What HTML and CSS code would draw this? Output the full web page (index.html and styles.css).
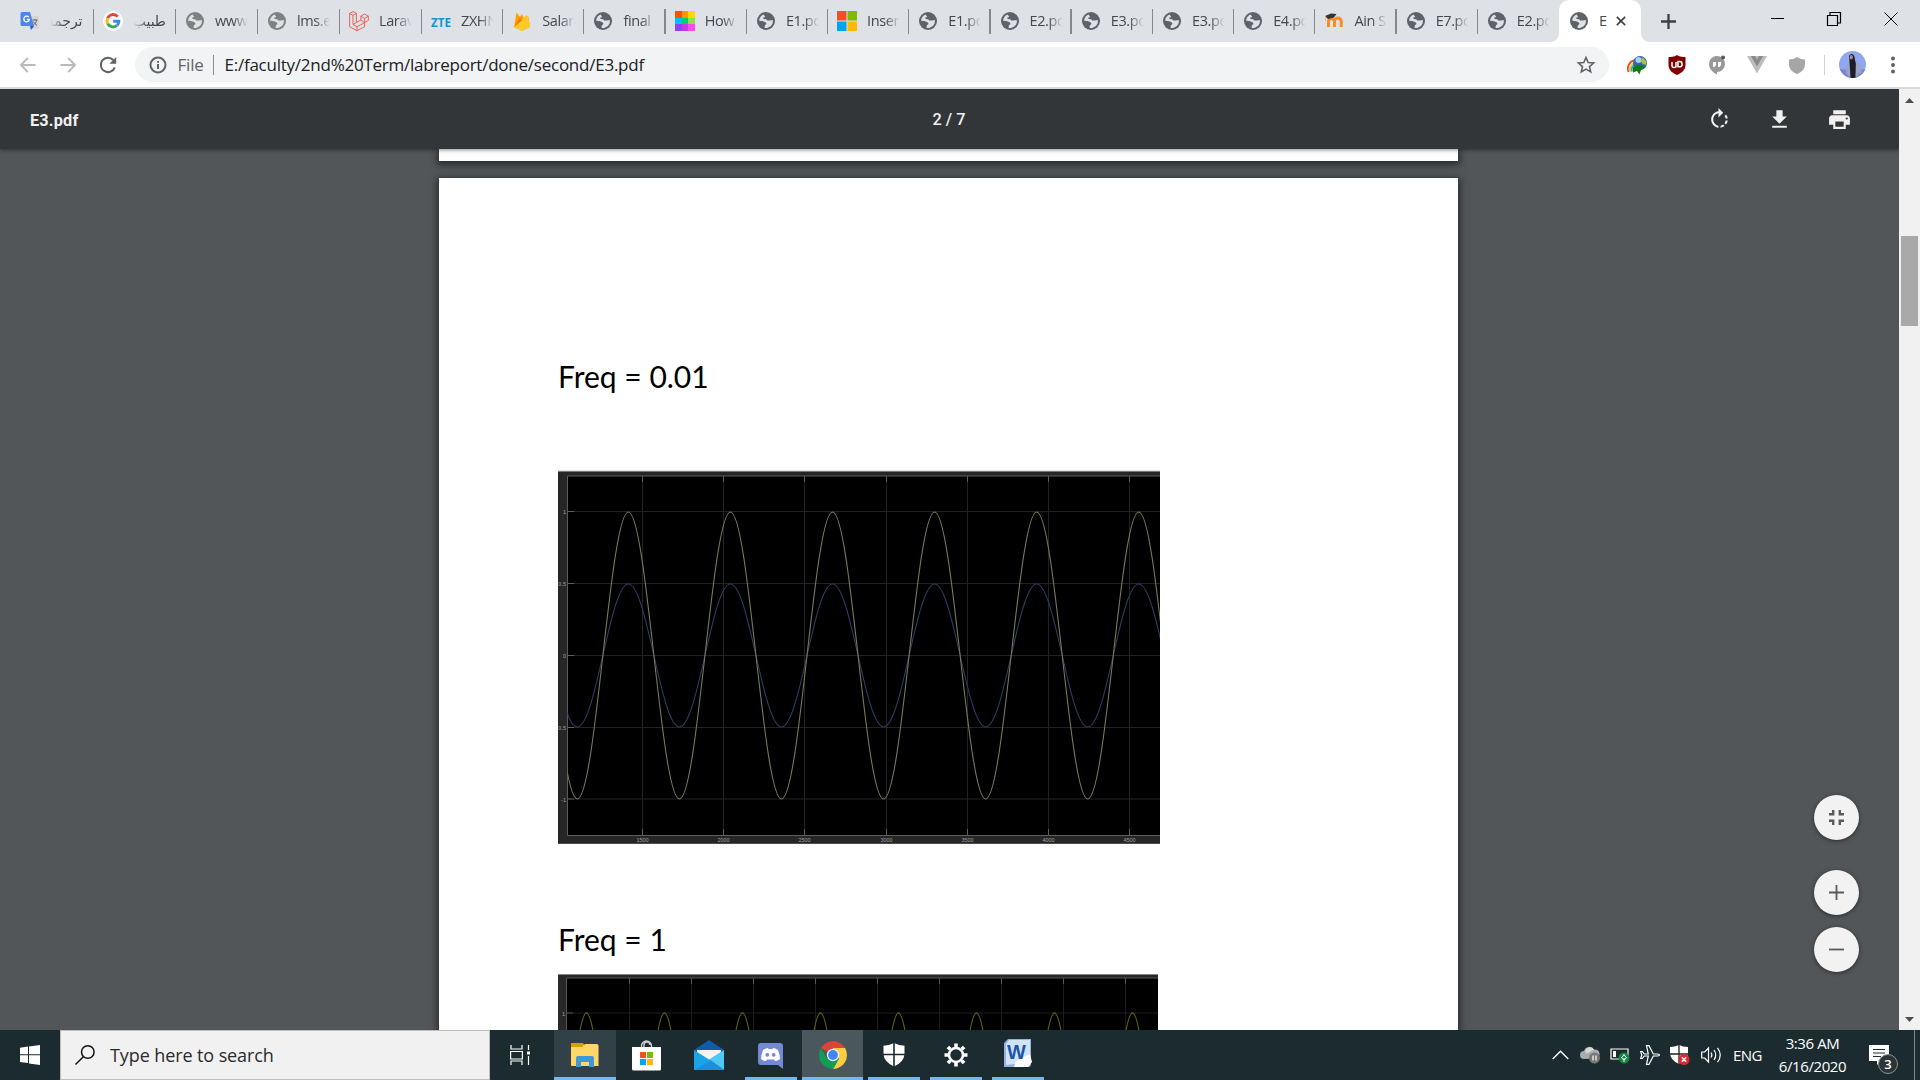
FILE: index.html
```html
<!DOCTYPE html>
<html lang="en">
<head>
<meta charset="utf-8">
<title>E3.pdf</title>
<link rel="stylesheet" href="styles.css">
</head>
<body>
<svg class="defs" aria-hidden="true">
  <symbol id="globe" viewBox="0 0 18 18">
    <circle cx="9" cy="9" r="9" fill="currentColor"/>
    <path d="M6.6 2.6C3.9 3.600 2.200 6.100 2.100 8.700L5.200 8.900 8.600 10.200 9.600 11.900 7.900 13.300 7.500 15.700C8.400 16 9.800 16 10.700 15.700 12.800 15.100 14.400 13.800 15.300 12 15.900 10.800 16 9.400 15.800 8.100L12.900 8.600 10.200 8.400 9.300 7.300 6.500 6.900 6.300 5.500 8.300 4.900Z" fill="#dee1e6"/>
    <path d="M8.600 2.100 9.400 3.500 8.100 5.600 9.200 6.900 12 8 15.900 7.600 14.600 4.500Z" fill="currentColor"/>
  </symbol>
</svg>

<header class="tabstrip">
  <div class="tab tab-first rtl"><svg class="fav" viewBox="0 0 20 20"><path d="M9 5h9a1 1 0 0 1 1 1v12H12z" fill="#d5d5d5"/><path d="M2 1h8l4 14H2a1.500 1.500 0 0 1-1.500-1.500v-11A1.500 1.500 0 0 1 2 1z" fill="#4a86ee"/><path d="M10 15h4l-3 4z" fill="#2a56c6"/><path d="M8.800 6.200A2.800 2.800 0 1 0 9.400 8.400H6.800" stroke="#fff" stroke-width="1.300" fill="none"/><path d="M12.500 9h5M15 8v1M16.800 9c-.5 2.500-2 4-3.500 5M13.500 10.500c1 2 2 3 3.500 3.800" stroke="#666" fill="none"/></svg><span class="label">ترجمة</span></div>
  <div class="tab wide rtl"><svg class="fav" viewBox="0 0 20 20"><circle cx="10" cy="10" r="10" fill="#fff"/><g fill="none" stroke-width="2.900"><path d="M14.700 5.600A6 6 0 0 0 4.700 7.200" stroke="#ea4335"/><path d="M4.700 7.200a6 6 0 0 0 0 5.600" stroke="#fbbc05"/><path d="M4.700 12.800a6 6 0 0 0 9.400 1.500" stroke="#34a853"/><path d="M14.100 14.300A6 6 0 0 0 15.900 10.200H10.200" stroke="#4285f4"/></g></svg><span class="label">طبيب</span></div>
  <div class="tab wide"><svg class="fav globe pale"><use href="#globe"/></svg><span class="label">www.</span></div>
  <div class="tab wide"><svg class="fav globe pale"><use href="#globe"/></svg><span class="label">lms.e</span></div>
  <div class="tab wide"><svg class="fav" viewBox="0 0 20 20"><path d="M.6 2.400 4 .6l3.400 1.800v9.200l4.400-2.500V5.200L15.600 3l3.800 2.200v4.200L15.600 11.600v4.200L8 19.600.6 15.800zM.6 2.400 4 4.300 7.400 2.400M4 4.300v9.200l3.400-1.900M4 13.500l4 2.300 7.600-4.200-3.800-2.500M8 15.800v3.800M11.800 5.200l3.800 2.200 3.800-2.200M15.600 7.400v4.200" stroke="#f0554d" stroke-width=".9" fill="none"/></svg><span class="label">Larav</span></div>
  <div class="tab"><svg class="fav" viewBox="0 0 20 20"><text x="0" y="16" textLength="20" lengthAdjust="spacingAndGlyphs" class="zte">ZTE</text></svg><span class="label">ZXHN</span></div>
  <div class="tab"><svg class="fav" viewBox="0 0 20 20"><path d="M2 16 4.500 1.500 8 6 9.800 3l2 4L14 4.500l2.400 1L18 16l-8 4z" fill="#ffa000"/><path d="M2 16 14.500 4.500 16 5.500 18 16l-8 4z" fill="#ffca28"/><path d="M2 16 8 6l2 3.500z" fill="#f57c00"/></svg><span class="label">Salar</span></div>
  <div class="tab"><svg class="fav globe"><use href="#globe"/></svg><span class="label">final</span></div>
  <div class="tab"><svg class="fav" viewBox="0 0 20 20"><path fill="#ff5100" d="M0 0h7v7H0z"/><path fill="#ff9400" d="M7 0h6v7H7z"/><path fill="#ffd800" d="M13 0h7v7h-7z"/><path fill="#00bfff" d="M0 7h7v6H0z"/><path fill="#00d063" d="M7 7h6v6H7z"/><path fill="#85e550" d="M13 7h7v6h-7z"/><path fill="#8d42f5" d="M0 13h7v7H0z"/><path fill="#c738e8" d="M7 13h6v7H7z"/><path fill="#ff49ef" d="M13 13h7v7h-7z"/></svg><span class="label">How</span></div>
  <div class="tab"><svg class="fav globe"><use href="#globe"/></svg><span class="label">E1.pd</span></div>
  <div class="tab"><svg class="fav" viewBox="0 0 20 20"><path fill="#f25022" d="M0 0h9.500v9.500H0z"/><path fill="#7fba00" d="M10.500 0H20v9.500h-9.500z"/><path fill="#00a4ef" d="M0 10.500h9.500V20H0z"/><path fill="#ffb900" d="M10.500 10.500H20V20h-9.500z"/></svg><span class="label">Inser</span></div>
  <div class="tab"><svg class="fav globe"><use href="#globe"/></svg><span class="label">E1.pd</span></div>
  <div class="tab"><svg class="fav globe"><use href="#globe"/></svg><span class="label">E2.pd</span></div>
  <div class="tab"><svg class="fav globe"><use href="#globe"/></svg><span class="label">E3.pd</span></div>
  <div class="tab"><svg class="fav globe"><use href="#globe"/></svg><span class="label">E3.pd</span></div>
  <div class="tab"><svg class="fav globe"><use href="#globe"/></svg><span class="label">E4.pd</span></div>
  <div class="tab"><svg class="fav" viewBox="0 0 20 20"><path d="M4.500 16V10.500a3 3 0 0 1 6 0V16M10.500 16v-5.500a3.200 3.200 0 0 1 6.800 0V16" stroke="#f98c25" stroke-width="3" fill="none"/><path d="M1 5 7 2.500 12.500 3 10 6.500 4 8z" fill="#333"/><path d="M1.500 5.500v5" stroke="#f5b98a"/></svg><span class="label">Ain S</span></div>
  <div class="tab"><svg class="fav globe"><use href="#globe"/></svg><span class="label">E7.pd</span></div>
  <div class="tab no-line"><svg class="fav globe"><use href="#globe"/></svg><span class="label">E2.pd</span></div>
  <div class="tab active"><svg class="fav globe"><use href="#globe"/></svg><span class="label">E</span><svg class="close" viewBox="0 0 12 12"><path d="M1 1l10 10M11 1 1 11" stroke="#3c4043" stroke-width="2"/></svg></div>
  <svg class="newtab" viewBox="0 0 15 15"><path d="M7.500 0v15M0 7.500h15" stroke="#3c4043" stroke-width="2.300"/></svg>
  <div class="window-buttons">
    <svg viewBox="0 0 14 14"><path d="M1 6.500h13" stroke="#000"/></svg>
    <svg viewBox="0 0 14 14"><path d="M.5 3.500h10v10h-10zM3 3.500v-3h10.500v10.500h-3" stroke="#000" fill="none" stroke-width="1.200"/></svg>
    <svg viewBox="0 0 14 14"><path d="M.5.5l13 13M13.500.5l-13 13" stroke="#000"/></svg>
  </div>
</header>

<nav class="toolbar">
  <div class="nav-btn"><svg class="i16 dim" viewBox="0 0 16 16"><path d="M15.500 8H1M7.800 1 1 8l6.800 7" /></svg></div>
  <div class="nav-btn"><svg class="i16 dim" viewBox="0 0 16 16"><path d="M.5 8H15M8.200 1 15 8l-6.800 7" /></svg></div>
  <div class="nav-btn"><svg class="i18 dark" viewBox="0 0 18 18"><path d="M15.800 11.300A7.200 7.200 0 1 1 14.300 4" /><path d="M17.200 1v6.800h-6.800z" class="solid"/></svg></div>
  <div class="omnibox">
    <svg class="i18 info" viewBox="0 0 18 18"><circle cx="9" cy="9" r="7.500"/><path d="M9 8v5M9 5v1.800"/></svg>
    <span class="scheme">File</span>
    <span class="url">E:/faculty/2nd%20Term/labreport/done/second/E3.pdf</span>
    <svg class="star" viewBox="0 0 18 18"><path d="M9 1.500l2.200 5 5.400.5-4.100 3.600 1.200 5.300L9 13.100l-4.700 2.800 1.200-5.300L1.400 7l5.400-.5z"/></svg>
  </div>
  <div class="ext"><svg viewBox="0 0 20 20"><path d="M1.500 17C-.5 11 3 5.500 9 5" stroke="#e34b3b" stroke-width="1.800" fill="none"/><path d="M3 17C1.500 11.500 5 7.500 9.500 7" stroke="#f4d234" stroke-width="1.800" fill="none"/><path d="M4.800 16.500C3.500 12.500 6 9.500 10 9" stroke="#25a7dc" stroke-width="1.800" fill="none"/><circle cx="13" cy="8" r="7" fill="#2f66b4"/><circle cx="11.500" cy="5" r="3" fill="#a9cdea"/><path d="M15 2q5 3 4.500 8l-4-1-1.500-3z" fill="#a8c03a"/><path d="M5.500 12.500 12 9.500l7 2.500-5 3-1.500 4.500-2.500-3.500-4 1.500z" fill="#127a16"/></svg></div>
  <div class="ext"><svg viewBox="0 0 20 20"><path d="M10 0c3 2 6 2 8.500 2v8c0 5-4 8-8.500 10C5.500 18 1.500 15 1.500 10V2C4 2 7 2 10 0z" fill="#800000"/><path d="M5 7v3.500a2 2 0 0 0 4 0V7M9 7v5.500M11 6.500h1.500a2.600 2.600 0 0 1 0 5.300H11z" stroke="#fff" stroke-width="1.500" fill="none"/></svg></div>
  <div class="ext"><svg viewBox="0 0 20 20"><path d="M10 1a8 8 0 1 1 0 16v2.500C5 17 2 13 2 9a8 8 0 0 1 8-8z" fill="#999"/><path d="M6 7h3v3l-1.500 2H6zM11 7h3v3l-1.500 2H11z" fill="#fff"/><circle cx="16" cy="2.500" r="2" fill="#555"/></svg></div>
  <div class="ext"><svg viewBox="0 0 20 20"><path d="M0 1h20L10 18.500z" fill="#bdbdbd"/><path d="M4 1h4l2 3.500L12 1h4L10 11.500z" fill="#8a8a8a"/></svg></div>
  <div class="ext"><svg viewBox="0 0 20 20"><path d="M10 2c3 2 5 2.300 8 2.500V9c0 5-3 8-8 10-5-2-8-5-8-10V4.500C5 4.300 7 4 10 2z" fill="#a6a6a6"/></svg></div>
  <span class="sep"></span>
  <svg class="avatar" viewBox="0 0 28 28"><clipPath id="av"><circle cx="14" cy="14" r="14"/></clipPath><g clip-path="url(#av)"><path fill="#8fa8f0" d="M0 0h28v28H0z"/><path fill="#7a86d8" d="M0 19h28v9H0z"/><path fill="#9aa3bf" d="M8.500 14l3-2h6l4.500 2.500 2 8.500h-3.500l-1.500 3H9.500L7 22z"/><path fill="#1c1d29" d="M10.500 5q2-3 4.500-1 1.500 1.500 1.500 5l1 4-.5 15h-5l-1-15z"/><ellipse cx="12.800" cy="6.500" rx="1.600" ry="2.400" fill="#b98a7a"/></g></svg>
  <svg class="dots" viewBox="0 0 4 18"><circle cx="2" cy="2.500" r="2"/><circle cx="2" cy="9" r="2"/><circle cx="2" cy="15.500" r="2"/></svg>
</nav>

<main class="viewer">
  <section class="pdf">
    <div class="pdf-bar">
      <span class="doc-name">E3.pdf</span>
      <span class="page-no">2 / 7</span>
      <div class="pdf-actions">
        <svg viewBox="0 0 24 24"><path d="M15.550 5.550L11 1v3.070C7.060 4.560 4 7.920 4 12s3.050 7.440 7 7.930v-2.020c-2.840-.48-5-2.940-5-5.910s2.160-5.430 5-5.910V10l4.550-4.450zM19.930 11c-.17-1.390-.72-2.730-1.620-3.890l-1.420 1.420c.54.75.88 1.600 1.020 2.470h2.020zM13 17.900v2.020c1.390-.17 2.740-.71 3.900-1.610l-1.440-1.440c-.75.54-1.590.89-2.460 1.030zm3.890-2.420l1.420 1.410c.9-1.160 1.450-2.500 1.620-3.890h-2.020c-.14.87-.48 1.720-1.020 2.480z"/></svg>
        <svg viewBox="0 0 24 24"><path d="M19 9h-4V3H9v6H5l7 7 7-7zM5 18v2h14v-2H5z"/></svg>
        <svg viewBox="0 0 24 24"><path d="M19 8H5c-1.660 0-3 1.340-3 3v6h4v4h12v-4h4v-6c0-1.660-1.340-3-3-3zm-3 11H8v-5h8v5zm3-7c-.55 0-1-.45-1-1s.45-1 1-1 1 .45 1 1-.45 1-1 1zm-1-9H6v4h12V3z"/></svg>
      </div>
    </div>
    <div class="page page-prev"></div>
    <div class="page page-current">
      <h2 class="heading">Freq = 0.01</h2>
      <svg class="plot plot-one" width="602" height="374" viewBox="0 0 602 374">
        <rect width="602" height="374" fill="#e4e4e4"/>
        <rect y="1" width="602" height="373" fill="#777"/>
        <rect y="2" width="602" height="371.500" fill="#262626"/>
        <path d="M9.500 6H602V365H9.500z" fill="#000"/>
        <path d="M84.500 6v359M165.500 6v359M246.500 6v359M328.500 6v359M409.500 6v359M490.500 6v359M571.500 6v359M9 41.500h593M9 113.500h593M9 185.500h593M9 257.500h593M9 329h593" stroke="#222"/>
        <path d="M602 6H9.500V365.500H602" fill="none" stroke="#5c5c5c"/>
        <path d="M84.500 6v6M165.500 6v6M246.500 6v6M328.500 6v6M409.500 6v6M490.500 6v6M571.500 6v6M84.500 359v6M165.500 359v6M246.500 359v6M328.500 359v6M409.500 359v6M490.500 359v6M571.500 359v6M9 41.500h7M9 113.500h7M9 185.500h7M9 257.500h7M9 329h7" stroke="#5c5c5c"/>
        <clipPath id="c1"><path d="M9.500 6H602V366H9.500z"/></clipPath>
        <g clip-path="url(#c1)" fill="none">
          <path stroke="#2d3d66" stroke-width="1.100" d="M-31.700 114c18.600 0 32.450 143 51.040 143s32.450-143 51.040-143 32.450 143 51.040 143 32.450-143 51.040-143 32.450 143 51.040 143 32.450-143 51.040-143 32.450 143 51.040 143 32.450-143 51.040-143 32.450 143 51.040 143 32.450-143 51.040-143 32.450 143 51.040 143 32.450-143 51.040-143 32.450 143 51.040 143"/>
          <path stroke="#78785a" stroke-width="1.100" d="M-31.700 42c18.600 0 32.450 287 51.040 287s32.450-287 51.040-287 32.450 287 51.040 287 32.450-287 51.040-287 32.450 287 51.040 287 32.450-287 51.040-287 32.450 287 51.040 287 32.450-287 51.040-287 32.450 287 51.040 287 32.450-287 51.040-287 32.450 287 51.040 287 32.450-287 51.040-287 32.450 287 51.040 287"/>
        </g>
        <g class="ticks" text-anchor="end"><text x="8" y="44">1</text><text x="8" y="116">0.5</text><text x="8" y="188">0</text><text x="8" y="260">-0.5</text><text x="8" y="332">-1</text></g>
        <g class="ticks" text-anchor="middle"><text x="84.500" y="372">1500</text><text x="165.500" y="372">2000</text><text x="246.500" y="372">2500</text><text x="328.500" y="372">3000</text><text x="409.500" y="372">3500</text><text x="490.500" y="372">4000</text><text x="571.500" y="372">4500</text></g>
      </svg>
      <h2 class="heading second">Freq = 1</h2>
      <svg class="plot plot-two" width="600" height="374" viewBox="0 0 600 374">
        <rect width="600" height="374" fill="#888"/>
        <rect y="1" width="600" height="373" fill="#282828"/>
        <path d="M8.500 4H600V374H8.500z" fill="#000"/>
        <path d="M71.500 4v370M133.500 4v370M195.500 4v370M257.500 4v370M319.500 4v370M381.500 4v370M443.500 4v370M505.500 4v370M567.500 4v370M9 39h591" stroke="#1c1c1c"/>
        <path d="M600 4H8.500V374" fill="none" stroke="#555"/>
        <path d="M71.500 4v6M133.500 4v6M195.500 4v6M257.500 4v6M319.500 4v6M381.500 4v6M443.500 4v6M505.500 4v6M567.500 4v6M9 39h6" stroke="#555"/>
        <clipPath id="c2"><path d="M9 4H600V374H9z"/></clipPath>
        <path clip-path="url(#c2)" fill="none" stroke="#5c5c0c" stroke-width="1.300" d="M-10.500 299c14.200 0 24.800-260 39-260s24.800 260 39 260 24.800-260 39-260 24.800 260 39 260 24.800-260 39-260 24.800 260 39 260 24.800-260 39-260 24.800 260 39 260 24.800-260 39-260 24.800 260 39 260 24.800-260 39-260 24.800 260 39 260 24.800-260 39-260 24.800 260 39 260 24.800-260 39-260 24.800 260 39 260"/>
        <g class="ticks" text-anchor="end"><text x="7" y="42">1</text></g>
      </svg>
    </div>
    <div class="zoom-buttons">
      <button class="fab fit"><svg viewBox="0 0 15 15"><path d="M0 4.200h4.200V0M10.800 0v4.200H15M0 10.800h4.200V15M15 10.800h-4.200V15" stroke-width="2.400"/></svg></button>
      <button class="fab"><svg viewBox="0 0 15 15"><path d="M7.500 0v15M0 7.500h15" stroke-width="1.800"/></svg></button>
      <button class="fab"><svg viewBox="0 0 15 15"><path d="M0 7.500h15" stroke-width="1.800"/></svg></button>
    </div>
  </section>
  <aside class="scrollbar">
    <svg viewBox="0 0 9 5"><path d="M0 5 4.500 0 9 5z" fill="#505050"/></svg>
    <span class="thumb"></span>
    <svg class="down" viewBox="0 0 9 5"><path d="M0 0h9L4.500 5z" fill="#505050"/></svg>
  </aside>
</main>

<footer class="taskbar">
  <div class="start"><svg viewBox="0 0 20 20"><path d="M0 2.700 8 1.600v7.700H0zM9 1.400 20 0v9.300H9zM0 10.300h8v7.800L0 17zM9 10.300h11V20L9 18.400z" fill="#fff"/></svg></div>
  <div class="search"><svg viewBox="0 0 20 20"><circle cx="12.800" cy="7" r="6.300"/><path d="M8.300 11.700.5 19.500"/></svg><span>Type here to search</span></div>
  <div class="task taskview"><svg width="20" height="20" viewBox="0 0 20 20" fill="none" stroke="#fff" stroke-width="1.200"><path d="M1 0v4h11V0M1 20v-4h11v4M.600 6.500h11.800v7.500H.600zM18.500 0v5M18.500 11v9"/><path d="M17 6.500h3v3h-3z" fill="#fff" stroke="none"/></svg></div>
  <div class="task lit full"><svg width="28" height="26" viewBox="0 0 28 26"><path d="M0 1h12l2 3v4H0z" fill="#dd9d08"/><path d="M0 5h11l3-3h12a2 2 0 0 1 1.500 2v20H1a1 1 0 0 1-1-1z" fill="#ffd768"/><path d="M5 25V16a2 2 0 0 1 2-2h14a2 2 0 0 1 2 2v9h-5v-5h-8v5z" fill="#3f96d8"/></svg></div>
  <div class="task"><svg width="29" height="31" viewBox="0 0 29 31"><path d="M9.500 8V6a5 5 0 0 1 10 0v2M12 8V5a3 3 0 0 1 6 0" fill="none" stroke="#ccc" stroke-width="1.400"/><path d="M0 7h29v22a1.500 1.500 0 0 1-1.500 1.500h-26A1.500 1.500 0 0 1 0 29z" fill="#fff"/><path fill="#f25022" d="M8 12h6v6H8z"/><path fill="#7fba00" d="M15 12h6v6h-6z"/><path fill="#00a4ef" d="M8 19h6v6H8z"/><path fill="#ffb900" d="M15 19h6v6h-6z"/></svg></div>
  <div class="task"><svg width="30" height="30" viewBox="0 0 30 30"><path d="M0 10 15 0l15 10v5H0z" fill="#0f5ca8"/><path d="M3 10h24v6L15 20 3 16z" fill="#f4f4f4"/><path d="M0 10 15 19.500 30 30H0z" fill="#1da2e6"/><path d="M30 10V30L15 19.500z" fill="#4cc9f5"/><path d="M0 30 17 20.800 30 30z" fill="#1b8fdc"/></svg></div>
  <div class="task open"><svg width="25" height="27" viewBox="0 0 25 27"><path d="M3 1h19a3 3 0 0 1 3 3v23l-5-4H3a3 3 0 0 1-3-3V4a3 3 0 0 1 3-3z" fill="#7489d4"/><path d="M5 8q3-2 5-2l.500 1h4l.500-1q2 0 5 2 2 5 2 9-2 2-5 2l-1-1.500h-7L8 19q-3 0-5-2 0-4 2-9z" fill="#fff"/><circle cx="9.300" cy="12.800" r="1.900" fill="#7489d4"/><circle cx="15.700" cy="12.800" r="1.900" fill="#7489d4"/></svg></div>
  <div class="task hot full"><svg width="28" height="28" viewBox="0 0 28 28"><path d="M14 14 1.900 7A14 14 0 0 1 26.100 7z" fill="#dc4437"/><path d="M14 14V7h12.100A14 14 0 0 1 14 28l6-10.500z" fill="#ffcd40"/><path d="M14 14 8 17.500 1.900 7A14 14 0 0 0 14 28l6-10.500z" fill="#109d58"/><circle cx="14" cy="14" r="6.200" fill="#f1f1f1"/><circle cx="14" cy="14" r="4.900" fill="#4285f4"/></svg></div>
  <div class="task open"><svg width="22" height="24" viewBox="0 0 22 24"><path d="M11 0q5 2.500 10.500 2.800V11Q21 19 11 23.500 1 19 .500 11V2.800Q6 2.500 11 0z" fill="#fff"/><path d="M11 0v24M0 11.500h22" stroke="#1b2b30" stroke-width="1.600"/></svg></div>
  <div class="task open"><svg width="24" height="24" viewBox="-12 -12 24 24"><circle r="7" fill="none" stroke="#fff" stroke-width="2.600"/><g stroke="#fff" stroke-width="3.600"><path d="M0-8v-3.500M0 8v3.500M-8 0h-3.500M8 0h3.500M5.700 5.700l2.400 2.400M-5.700 5.700l-2.400 2.400M5.700-5.700l2.400-2.400M-5.700-5.700l-2.400-2.400"/></g></svg></div>
  <div class="task open"><svg class="doc" width="28" height="29" viewBox="0 0 28 29"><path d="M4 0h23v25a3 3 0 0 1-3 3H0V4z" fill="#8fb4e3"/><path d="M5 1h21v22L2 26V5z" fill="#d3e3f7"/><path d="M10 28 12 22l14-7 2 8-4 5z" fill="#fff"/><text x="3" y="20" class="word">W</text></svg></div>
  <div class="tray">
    <svg width="17" height="10" viewBox="0 0 17 10"><path d="M.7 9 8.500 1.200 16.300 9" stroke="#fff" stroke-width="1.300" fill="none"/></svg>
    <svg width="20" height="18" viewBox="0 0 20 18"><path d="M4 13a4 4 0 0 1 0-8 5.500 5.500 0 0 1 10-1.500 4.500 4.500 0 0 1 2 9z" fill="#a9adaf"/><path d="M5 5.500a5 5 0 0 1 9-2l-7 4z" fill="#d8d8d8"/><circle cx="14.500" cy="12" r="5.500" fill="#777"/><path d="M13 9.500v5M16 9.500v5" stroke="#fff" stroke-width="1.200"/></svg>
    <svg width="20" height="18" viewBox="0 0 20 18"><path d="M1 3h17v10H1z" fill="none" stroke="#fff" stroke-width="1.200"/><path d="M3 5h3v6H3z" fill="#fff"/><circle cx="14" cy="12" r="5.500" fill="#10893e"/><path d="M14 16v-4M14 8.500l-2.500 3.500L14 14l2.500-2z" stroke="#fff" fill="none"/></svg>
    <svg width="20" height="20" viewBox="0 0 20 20"><path d="M.7 6.500h1.600L4.300 9h4L6.500.7H9L13.300 9H17.500q2 .2 2 1t-2 1H13.300L9 19.300H6.500L8.300 11h-4l-2 2.500H.7L1.800 10z" stroke="#fff" stroke-width="1.200" fill="none"/></svg>
    <svg width="20" height="20" viewBox="0 0 20 20"><path d="M9 0q4 2 9 2v6q0 7-9 11Q0 15 0 8V2q5 0 9-2z" fill="#fff"/><path d="M9 0v19M0 9h18" stroke="#222" stroke-width="1.300"/><circle cx="14" cy="14.500" r="5.500" fill="#d92b2f"/><path d="M11.800 12.300l4.400 4.400M16.200 12.300l-4.400 4.400" stroke="#fff" stroke-width="1.400"/></svg>
    <svg width="21" height="16" viewBox="0 0 21 16"><path d="M.7 5h3L7.500 1v14L3.700 11h-3zM10 5.500q1.700 2.500 0 5M13 3q3.500 5 0 10M16.500.800q5.500 7.200 0 14.400" stroke="#fff" stroke-width="1.200" fill="none"/></svg>
    <span class="lang">ENG</span>
    <div class="clock"><span class="time">3:36 AM</span><span>6/16/2020</span></div>
    <div class="notes"><svg width="20" height="20" viewBox="0 0 20 20"><path d="M0 0h20v16h-8l-4 4v-4H0z" fill="#fff"/><path d="M4 4.500h12M4 8h12M4 11.500h8" stroke="#1d2f35" stroke-width="1.200"/></svg><span class="badge">3</span></div>
  </div>
  <span class="peek"></span>
</footer>
</body>
</html>
```
FILE: styles.css
```css
* { box-sizing: border-box; }
body {
  margin: 0;
  width: 1920px;
  height: 1080px;
  overflow: hidden;
  display: flex;
  flex-direction: column;
  font-family: "Open Sans", "Noto Sans", sans-serif;
  background: #525659;
}
svg { display: block; flex: none; overflow: visible; }
.defs { position: absolute; width: 0; height: 0; }

/* tab strip */
.tabstrip { height: 42px; flex: none; display: flex; background: #dee1e6; padding-left: 10.500px; }
.tab {
  width: 81.230px;
  flex: none;
  display: flex;
  align-items: center;
  padding-left: 9px;
  position: relative;
}
.tab.wide { width: 82px; }
.tab-first { width: 83.500px; }
.tab::after {
  content: "";
  position: absolute;
  right: 0;
  top: 9px;
  width: 1.300px;
  height: 25px;
  background: #85888c;
}
.tab.no-line::after, .tab.active::after { display: none; }
.fav { width: 20px; height: 20px; }
.fav.globe { padding: 1px; color: #5f6368; }
.fav.pale { color: #808080; }
.label {
  margin-left: 10px;
  width: 33px;
  overflow: hidden;
  white-space: nowrap;
  font-size: 14.500px;
  line-height: 24px;
  letter-spacing: -.4px;
  color: #45494d;
  -webkit-mask-image: linear-gradient(90deg, #000 55%, transparent);
  mask-image: linear-gradient(90deg, #000 55%, transparent);
}
.rtl .label {
  direction: rtl;
  font-family: "DejaVu Sans", sans-serif;
  font-size: 14px;
  -webkit-mask-image: linear-gradient(270deg, #000 55%, transparent);
  mask-image: linear-gradient(270deg, #000 55%, transparent);
}
.zte { font: bold 12px "Open Sans", sans-serif; fill: #1593d2; }
.tab.active { width: 82px; background: #fff; border-radius: 10px 10px 0 0; padding-left: 10px; }
.tab.active::before {
  content: "";
  position: absolute;
  left: -8px;
  right: -8px;
  bottom: 0;
  height: 8px;
  background:
    radial-gradient(circle at 0 0, transparent 7.500px, #fff 8px) left / 8px 8px no-repeat,
    radial-gradient(circle at 100% 0, transparent 7.500px, #fff 8px) right / 8px 8px no-repeat;
}
.tab.active .label { width: 9px; -webkit-mask-image: none; mask-image: none; }
.close { width: 10px; height: 10px; margin-left: 8px; }
.newtab { width: 15px; height: 15px; margin: 13.500px 0 0 20px; }
.window-buttons { margin: 11.500px 22px 0 auto; display: flex; gap: 43px; }
.window-buttons svg { width: 14px; height: 14px; }

/* address bar */
.toolbar {
  height: 47px;
  flex: none;
  display: flex;
  align-items: center;
  background: #fff;
  border-bottom: 2px solid #d8dade;
  padding-left: 7.500px;
}
.nav-btn { width: 40px; display: grid; place-items: center; }
.i16 { width: 16px; height: 16px; }
.i18 { width: 18px; height: 18px; }
.dim { fill: none; stroke: #bababa; stroke-width: 1.800; }
.dark { fill: none; stroke: #5f6368; stroke-width: 2; }
.solid { fill: #5f6368; stroke: none; }
.omnibox {
  margin-left: 7.500px;
  width: 1474px;
  height: 35px;
  border-radius: 18px;
  background: #f1f3f4;
  display: flex;
  align-items: center;
  padding: 0 14px;
  font-size: 17px;
  line-height: 24px;
  white-space: nowrap;
}
.info { fill: none; stroke: #5f6368; stroke-width: 2; }
.scheme { margin-left: 10.500px; width: 36px; color: #5f6368; border-right: 1.500px solid #8a8d91; line-height: 20px; letter-spacing: -.2px; }
.url { margin-left: 11px; color: #202124; letter-spacing: -.24px; }
.star { width: 18px; height: 18px; margin-left: auto; fill: none; stroke: #5f6368; stroke-width: 1.600; }
.ext { width: 40px; display: grid; place-items: center; }
.ext:nth-of-type(5) { margin-left: 7.500px; }
.ext svg { width: 20px; height: 20px; }
.sep { width: 1px; height: 20px; background: #cfd1d4; margin-left: 7.500px; }
.avatar { width: 27px; height: 27px; margin-left: 14px; }
.dots { width: 4px; height: 18px; margin-left: 25px; fill: #5f6368; }

/* document viewer */
.viewer { height: 941px; flex: none; display: flex; overflow: hidden; }
.pdf { width: 1899px; position: relative; overflow: hidden; background: #525659; }
.pdf-bar {
  position: relative;
  z-index: 2;
  height: 60px;
  display: grid;
  grid-template-columns: 1fr auto 1fr;
  align-items: center;
  padding: 0 47px 0 30px;
  background: #323639;
  box-shadow: 0 1px 4px rgba(0, 0, 0, .45);
  color: #f1f1f1;
  font: 500 16.250px Roboto, sans-serif;
}
.doc-name { font-weight: 700; letter-spacing: .2px; padding-top: 2px; }
.page-no { transform: translateX(8px); padding-top: 1px; }
.pdf-actions { display: flex; gap: 35px; justify-content: flex-end; }
.pdf-actions svg { width: 25px; height: 25px; fill: #f1f1f1; }
.page { width: 1019px; margin-left: 439px; background: #fff; box-shadow: 0 2px 7px 2px rgba(0, 0, 0, .5); }
.page-prev { height: 12px; }
.page-current { margin-top: 17px; height: 1320px; padding: 176px 0 0 119px; }
.heading { margin: 0; font: 400 30px/44px Lato, sans-serif; color: #000; height: 44px; }
.plot-one { margin-top: 72px; overflow: hidden; }
.heading.second { margin-top: 73px; }
.plot-two { margin-top: 13px; overflow: hidden; }
.ticks { font: 5.500px "Liberation Sans", sans-serif; fill: #a0a0a0; }
.zoom-buttons { position: absolute; right: 40px; top: 706px; display: flex; flex-direction: column; gap: 12px; z-index: 3; }
.fab {
  width: 45px;
  height: 45px;
  border: 0;
  padding: 0;
  border-radius: 50%;
  background: #f2f2f2;
  display: grid;
  place-items: center;
  box-shadow: 0 1px 4px rgba(0, 0, 0, .5);
}
.fab svg { width: 15px; height: 15px; fill: none; stroke: #5a5a5a; }
.fab.fit { margin-bottom: 18px; }
.scrollbar { width: 21px; background: #f1f1f1; display: flex; flex-direction: column; align-items: center; padding: 9px 0 8px; }
.scrollbar svg { width: 9px; height: 5px; }
.thumb { width: 17px; height: 90px; margin-top: 133px; background: #a8a8a8; }
.down { margin-top: auto; }

/* taskbar */
.taskbar { height: 50px; flex: none; display: flex; background: #1b2b30; color: #fff; position: relative; }
.start { width: 60px; display: grid; place-items: center; }
.start svg { width: 20px; height: 20px; }
.search {
  width: 430px;
  border: 1px solid #bdbdbd;
  background: #f1f1f1;
  display: flex;
  align-items: center;
  padding-left: 14px;
  color: #2b2b2b;
  font-size: 18px;
  letter-spacing: -.1px;
}
.search svg { width: 20px; height: 20px; fill: none; stroke: #111; stroke-width: 1.500; margin-right: 15px; }
.task { width: 61.950px; display: grid; place-items: center; position: relative; }
.taskview { width: 63.800px; padding-right: 3px; }
.open::after, .full::after {
  content: "";
  position: absolute;
  left: 5px;
  right: 5px;
  bottom: 0;
  height: 3px;
  background: #78b7ee;
}
.full::after { left: 0; right: 0; }
.lit { background: #314147; }
.hot { background: #4a575c; }
.doc { margin-top: -3px; }
.word { font: bold 20px "Liberation Sans", sans-serif; fill: #1d56a5; }
.tray { margin-left: auto; margin-right: 31px; display: flex; align-items: center; font-size: 16px; }
.tray > svg { margin-right: 10.300px; }
.lang { margin-left: 1px; font-size: 15px; letter-spacing: -.6px; width: 30px; }
.clock { width: 99px; display: flex; flex-direction: column; align-items: center; line-height: 23px; font-size: 15px; letter-spacing: -.4px; }
.notes { position: relative; margin-left: 7px; }
.badge {
  position: absolute;
  left: 9px;
  top: 9px;
  width: 20px;
  height: 20px;
  border: 1px solid #8b9496;
  border-radius: 50%;
  background: #2c3437;
  font: 600 13px/18px "Open Sans", sans-serif;
  text-align: center;
}
.peek { position: absolute; right: 5px; top: 0; width: 1px; height: 50px; background: #7d878a; }
```
